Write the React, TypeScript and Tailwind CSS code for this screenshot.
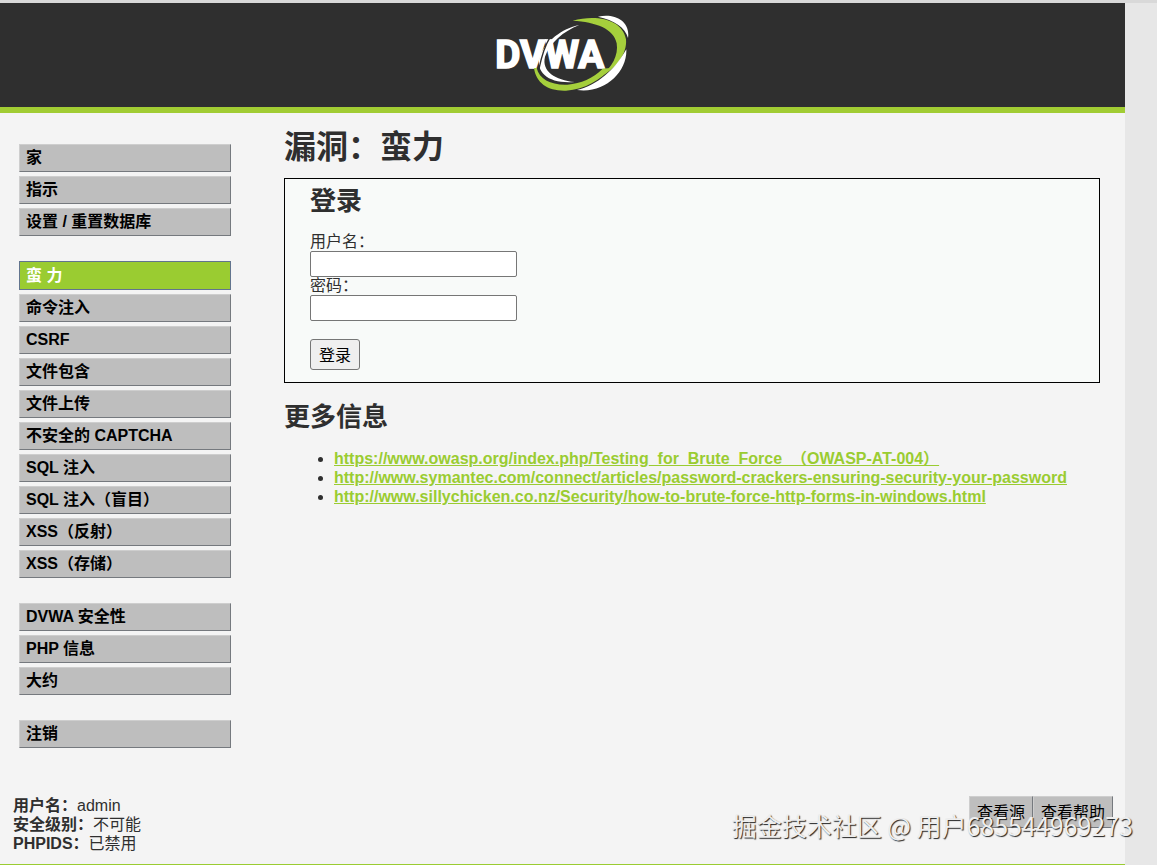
const menuGroups = [
  ["家", "指示", "设置 / 重置数据库"],
  [
    "蛮 力",
    "命令注入",
    "CSRF",
    "文件包含",
    "文件上传",
    "不安全的 CAPTCHA",
    "SQL 注入",
    "SQL 注入（盲目）",
    "XSS（反射）",
    "XSS（存储）",
  ],
  ["DVWA 安全性", "PHP 信息", "大约"],
  ["注销"],
];

const activeItem = "蛮 力";

const links = [
  {
    label: "https://www.owasp.org/index.php/Testing_for_Brute_Force_（OWASP-AT-004）",
    href: "https://www.owasp.org/index.php/Testing_for_Brute_Force_(OWASP-AT-004)",
  },
  {
    label: "http://www.symantec.com/connect/articles/password-crackers-ensuring-security-your-password",
    href: "http://www.symantec.com/connect/articles/password-crackers-ensuring-security-your-password",
  },
  {
    label: "http://www.sillychicken.co.nz/Security/how-to-brute-force-http-forms-in-windows.html",
    href: "http://www.sillychicken.co.nz/Security/how-to-brute-force-http-forms-in-windows.html",
  },
];

function Logo() {
  return (
    <svg width="135" height="78" viewBox="45 42 405 234" role="img" aria-label="DVWA">
      {/* thin white swoosh behind the letters */}
      <path
        d="M298 75 C244 86 198 124 179 168 C166 220 208 252 284 246 C226 240 184 214 195 170 C210 128 250 94 298 75Z"
        fill="#fff"
      />
      <text
        x="46"
        y="203"
        fill="#fff"
        stroke="#fff"
        strokeWidth="5"
        className="font-[Roboto,'Liberation_Sans',sans-serif] text-[116px] font-bold"
      >
        DVWA
      </text>
      <path d="M208 116 Q190 145 177 206" fill="none" stroke="#2f2f2f" strokeWidth="4" />
      {/* green ring */}
      <path
        d="M278 62 C350 42 428 58 438 118 C442 160 410 205 362 230 C396 202 416 166 410 130 C402 86 348 66 278 62Z"
        fill="#a5cf3c"
      />
      <path
        d="M162 204 C168 250 206 274 258 272 C316 268 364 238 392 204 L368 206 C338 236 304 250 262 254 C214 256 178 238 170 204Z"
        fill="#a5cf3c"
      />
      {/* white outer crescents */}
      <path d="M354 50 C402 38 452 62 444 114 C436 82 402 60 354 50Z" fill="#fff" />
      <path d="M439 148 C442 216 374 282 291 270 C352 256 404 210 439 148Z" fill="#fff" />
    </svg>
  );
}

function Menu() {
  return (
    <nav className="flex w-[212px] shrink-0 flex-col gap-[25px]">
      {menuGroups.map((group) => (
        <ul key={group[0]} className="flex flex-col gap-1">
          {group.map((item) => (
            <li key={item}>
              <a
                href="#"
                className={
                  item === activeItem
                    ? "flex h-[29px] items-center border border-slate-500 bg-[#9acc31] px-1.5 font-bold text-white"
                    : "flex h-7 items-center border border-t-[#cecece] border-r-[#75797e] border-b-[#75797e] border-l-[#cecece] bg-[#bebebe] px-1.5 font-bold text-black"
                }
              >
                {item}
              </a>
            </li>
          ))}
        </ul>
      ))}
    </nav>
  );
}

function LoginForm() {
  return (
    <form
      className="flex flex-col items-start border border-black bg-[#f8faf9] px-[25px] pt-1.5 pb-3"
      onSubmit={(e) => e.preventDefault()}
    >
      <h2 className="mb-4 text-[26px] leading-8 font-bold">登录</h2>
      <label htmlFor="username">用户名：</label>
      <input
        id="username"
        type="text"
        className="h-[26px] w-[207px] rounded-xs border border-[#767676] bg-white px-1"
      />
      <label htmlFor="password">密码：</label>
      <input
        id="password"
        type="password"
        className="h-[26px] w-[207px] rounded-xs border border-[#767676] bg-white px-1"
      />
      <button
        type="submit"
        className="mt-[18px] h-[31px] rounded-[3px] border border-[#767676] bg-[#efefef] px-2 pt-0.5 text-black"
      >
        登录
      </button>
    </form>
  );
}

export default function App() {
  return (
    <div className="relative min-h-screen overflow-hidden border-t-[3px] border-[#d9d9d9] bg-[#e7e7e7] font-['Liberation_Sans','Noto_Sans_CJK_SC',sans-serif] text-base leading-[18px] text-[#2f2f2f]">
      <div className="mr-8 border-b border-[#9acc31] bg-[#f4f4f4]">
        <header className="flex justify-center border-b-[6px] border-[#a1cc33] bg-[#2f2f2f] pt-[11px] pb-[15px]">
          <Logo />
        </header>

        <div className="flex items-start gap-[53px] pr-[25px] pl-[19px]">
          <div className="pt-[31px]">
            <Menu />
          </div>

          <main className="min-w-0 flex-1 pt-[14px]">
            <h1 className="mb-[11px] text-[32px] leading-10 font-bold">漏洞：蛮力</h1>
            <LoginForm />
            <h2 className="mt-[18px] mb-4 text-[26px] leading-8 font-bold">更多信息</h2>
            <ul className="list-disc pl-[50px] leading-[19px]">
              {links.map((link) => (
                <li key={link.href}>
                  <a href={link.href} className="font-bold text-[#9acc31] underline">
                    {link.label}
                  </a>
                </li>
              ))}
            </ul>
          </main>
        </div>

        <footer className="flex items-start justify-between pt-12 pr-3 pb-[11px] pl-[13px]">
          <div className="leading-[19px]">
            <p>
              <b>用户名：</b>admin
            </p>
            <p>
              <b>安全级别：</b>不可能
            </p>
            <p>
              <b>PHPIDS：</b>已禁用
            </p>
          </div>
          <div className="flex">
            <button className="h-8 border border-t-[#cecece] border-r-[#75797e] border-b-[#75797e] border-l-[#cecece] bg-[#bebebe] px-[7px] pt-0.5 text-black">
              查看源
            </button>
            <button className="h-8 border border-t-[#cecece] border-r-[#75797e] border-b-[#75797e] border-l-[#cecece] bg-[#bebebe] px-[7px] pt-0.5 text-black">
              查看帮助
            </button>
          </div>
        </footer>
      </div>

      {/* Watermark */}
      <div className="pointer-events-none absolute right-6 bottom-6 font-['Noto_Sans_CJK_SC',sans-serif] text-[25px] leading-8 text-[#eeeeee] [text-shadow:1px_1px_1px_#222]">
        掘金技术社区 @ 用户685544969273
      </div>
    </div>
  );
}
